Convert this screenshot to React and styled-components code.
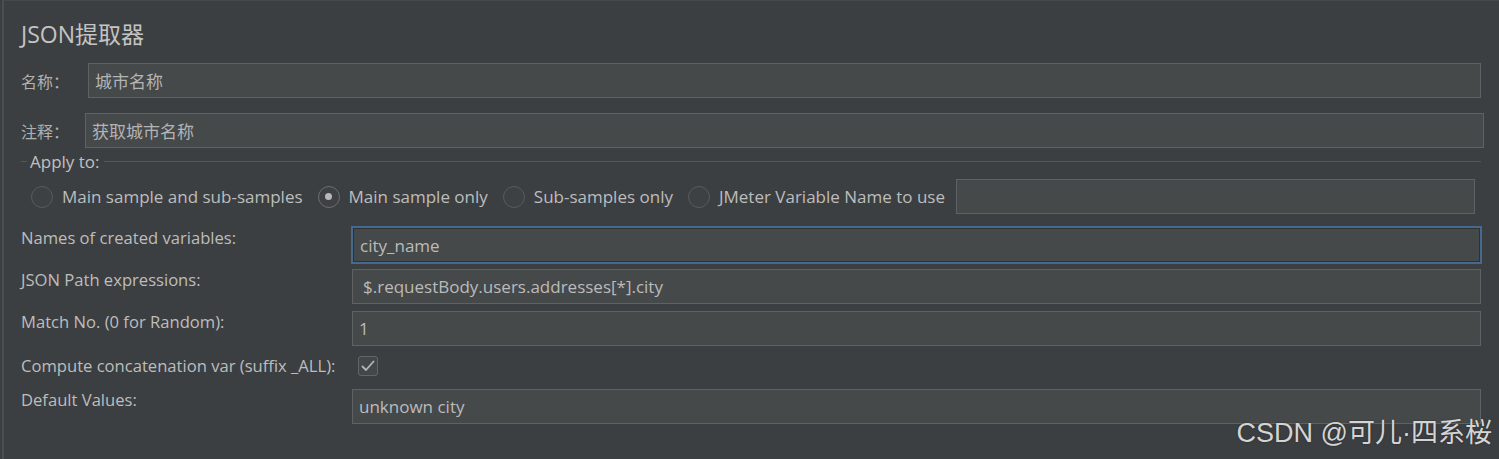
import React from 'react';
import styled, { createGlobalStyle } from 'styled-components';

const GlobalStyle = createGlobalStyle`
  html, body {
    margin: 0;
    padding: 0;
    background: #3c3f41;
  }
  body {
    font-family: "Open Sans", "Noto Sans CJK SC", sans-serif;
    color: #bbbbbb;
  }
`;

const Frame = styled.div`
  position: relative;
  width: 1497px;
  height: 459px;
  box-sizing: border-box;
  margin-left: 2px;
  border-left: 2px solid #4c4f51;
  border-top: 1px solid #46494b;
  padding: 18px 18px 0 17px;
  overflow: hidden;
  display: flex;
  flex-direction: column;
`;

const Title = styled.div`
  font-size: 23px;
  line-height: 30px;
  height: 30px;
  color: #c4c4c4;
  margin-bottom: 14px;
`;

const TopRow = styled.div`
  display: flex;
  align-items: center;
  height: 35px;
  margin-bottom: ${(p) => p.$mb || 0}px;
  margin-right: ${(p) => p.$mr || 0}px;
`;

const CjkLabel = styled.span`
  font-family: "Noto Sans CJK SC", sans-serif;
  font-size: 16px;
  color: #b0b0b0;
  width: ${(p) => p.$w}px;
  flex: none;
`;

const Field = styled.div`
  flex: 1;
  height: 35px;
  box-sizing: border-box;
  background: #45494a;
  border: 1.5px solid #5f6263;
  display: flex;
  align-items: center;
  padding-left: ${(p) => p.$pl ?? 6}px;
  font-size: 17px;
  color: #bbbbbb;
  ${(p) => p.$cjk && `font-family: "Noto Sans CJK SC", sans-serif; font-size: 17px; color: #b4b4b4;`}
`;

const FocusField = styled(Field)`
  border: 1px solid #2f3133;
  box-shadow: 0 0 0 2px #45698f;
  height: 34px;
  margin: 1px 1px 0 1px;
`;

const Group = styled.div`
  display: flex;
  flex-direction: column;
  margin-top: 4px;
`;

const Legend = styled.div`
  display: flex;
  align-items: center;
  height: 18px;
  font-size: 17px;
  color: #c0c0c0;
  &::before {
    content: '';
    width: 6px;
    height: 1px;
    background: #55585a;
    margin-right: 3px;
  }
  &::after {
    content: '';
    flex: 1;
    height: 1px;
    background: #55585a;
    margin-left: 4px;
  }
`;

const RadioRow = styled.div`
  display: flex;
  align-items: center;
  height: 35px;
  margin-top: 9px;
  padding-left: 10px;
  padding-right: 6px;
`;

const RadioItem = styled.label`
  display: flex;
  align-items: center;
  gap: 9px;
  margin-right: 15px;
  font-size: 17px;
  color: #bdbdbd;
  white-space: nowrap;
`;

const Circle = styled.span`
  width: 22px;
  height: 22px;
  box-sizing: border-box;
  border-radius: 50%;
  border: 1.5px solid ${(p) => (p.$on ? '#6b6e70' : '#585b5d')};
  background: #3e4143;
  display: flex;
  align-items: center;
  justify-content: center;
  &::after {
    content: '';
    display: ${(p) => (p.$on ? 'block' : 'none')};
    width: 7px;
    height: 7px;
    border-radius: 50%;
    background: #b8b8b8;
  }
`;

const VarField = styled(Field)`
  margin-left: -4px;
`;

const Grid = styled.div`
  display: grid;
  grid-template-columns: 331px 1fr;
  margin-top: 13px;
`;

const Label = styled.div`
  font-size: 16.6px;
  color: #bdbdbd;
  line-height: 22px;
  padding-top: ${(p) => p.$pt ?? 0}px;
  margin-bottom: ${(p) => p.$mb || 0}px;
  white-space: nowrap;
`;

const Cell = styled.div`
  display: flex;
  align-items: center;
  margin-bottom: ${(p) => p.$mb || 0}px;
  padding-left: ${(p) => p.$pl || 0}px;
`;

const Check = styled.span`
  width: 20px;
  height: 20px;
  box-sizing: border-box;
  border: 1.5px solid #626567;
  border-radius: 3px;
  background: #43474a;
  display: flex;
  align-items: center;
  justify-content: center;
`;

const Watermark = styled.div`
  position: absolute;
  right: 7px;
  bottom: 9px;
  font-family: "Liberation Sans", "Noto Sans CJK SC", sans-serif;
  font-size: 27px;
  color: #d4d4d4;
  text-shadow: 0 0 2px rgba(0, 0, 0, 0.4);
`;

const radios = [
  { text: 'Main sample and sub-samples', on: false },
  { text: 'Main sample only', on: true },
  { text: 'Sub-samples only', on: false },
  { text: 'JMeter Variable Name to use', on: false },
];

export default function App() {
  return (
    <>
      <GlobalStyle />
      <Frame>
        <Title>JSON提取器</Title>
        <TopRow $mb={15}>
          <CjkLabel $w={67}>名称：</CjkLabel>
          <Field $cjk>城市名称</Field>
        </TopRow>
        <TopRow $mr={-3}>
          <CjkLabel $w={64}>注释：</CjkLabel>
          <Field $cjk>获取城市名称</Field>
        </TopRow>
        <Group>
          <Legend>Apply to:</Legend>
          <RadioRow>
            {radios.map((r) => (
              <RadioItem key={r.text}>
                <Circle $on={r.on} />
                {r.text}
              </RadioItem>
            ))}
            <VarField />
          </RadioRow>
        </Group>
        <Grid>
          <Label $mb={7}>Names of created variables:</Label>
          <Cell $mb={7}>
            <FocusField>city_name</FocusField>
          </Cell>
          <Label $pt={-1} $mb={7}>JSON Path expressions:</Label>
          <Cell $mb={7}>
            <Field $pl={10}>$.requestBody.users.addresses[*].city</Field>
          </Cell>
          <Label $mb={9}>Match No. (0 for Random):</Label>
          <Cell $mb={9}>
            <Field>1</Field>
          </Cell>
          <Label $mb={12}>Compute concatenation var (suffix _ALL):</Label>
          <Cell $pl={6} $mb={12}>
            <Check>
              <svg width="14" height="12" viewBox="0 0 14 12">
                <path d="M1.5 6.5 L5 10 L12.5 1.5" fill="none" stroke="#b5b5b5" strokeWidth="1.8" strokeLinecap="round" strokeLinejoin="round" />
              </svg>
            </Check>
          </Cell>
          <Label>Default Values:</Label>
          <Cell>
            <Field>unknown city</Field>
          </Cell>
        </Grid>
        <Watermark>CSDN @可儿·四系桜</Watermark>
      </Frame>
    </>
  );
}
